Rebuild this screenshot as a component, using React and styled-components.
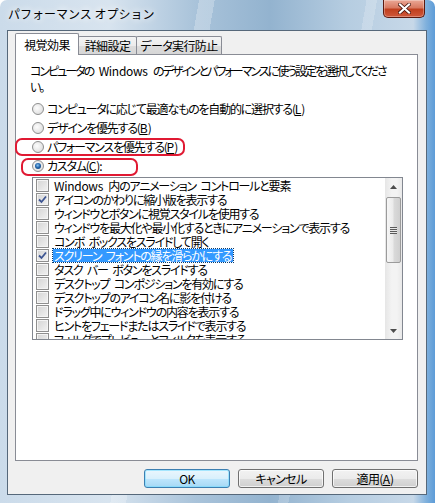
import React from 'react';
import styled, {createGlobalStyle, css} from 'styled-components';

const GlobalStyle = createGlobalStyle`
  html, body {
    margin: 0;
    padding: 0;
  }
  body {
    width: 435px;
    height: 503px;
    overflow: hidden;
    font-family: "Noto Sans CJK JP", sans-serif;
    font-size: 12px;
  }
`;

// narrow kana like the old bitmap UI font
const tight = css`
  font-feature-settings: "palt";
  letter-spacing: -1.2px;
  word-spacing: 3px;
`;

const Window = styled.div`
  width: 435px;
  height: 503px;
  box-sizing: border-box;
  display: flex;
  flex-direction: column;
  padding: 0 8px 8px 7px;
  border-radius: 7px 7px 0 0;
  background:
    linear-gradient(100deg, transparent 0 38%, rgba(255,255,255,0.25) 38% 41%, transparent 41% 70%, rgba(255,255,255,0.2) 70% 72%, transparent 72%),
    linear-gradient(to right, #cbdbea 0%, #d8e4ef 25%, #a9c3da 45%, #93b3cf 62%, #b6cde1 80%, #c7d8e8 95%, #7fb0dc 98%, #5d9cd8 100%);
`;

const TitleBar = styled.div`
  height: 30px;
  display: flex;
  align-items: flex-start;
  justify-content: space-between;
`;

const Title = styled.div`
  margin: 5px 0 0 1px;
  line-height: 18px;
  font-size: 12px;
  color: #000;
  text-shadow: 0 0 6px #fff, 0 0 10px #fff;
`;

const CloseButton = styled.div`
  width: 42px;
  height: 18px;
  margin-right: 2px;
  box-sizing: border-box;
  border: 1px solid #5b1a10;
  border-top: none;
  border-radius: 0 0 5px 5px;
  background: linear-gradient(#eaa896 0%, #d87a62 45%, #c0401f 55%, #d0583a 100%);
  box-shadow: inset 0 0 0 1px rgba(255, 255, 255, 0.3);
  display: flex;
  align-items: center;
  justify-content: center;
`;

const Client = styled.div`
  flex: 1;
  display: flex;
  flex-direction: column;
  background: #f0f0f0;
  border: 1px solid #56687a;
  padding: 2px 8px 6px 7px;
`;

const TabStrip = styled.div`
  height: 21px;
  display: flex;
  align-items: flex-end;
`;

const Tab = styled.div`
  box-sizing: border-box;
  width: ${p => p.$w}px;
  height: ${p => (p.$active ? 22 : 18)}px;
  margin-bottom: ${p => (p.$active ? -1 : 0)}px;
  margin-left: ${p => (p.$first ? 0 : -1)}px;
  position: relative;
  z-index: ${p => (p.$active ? 2 : 1)};
  border: 1px solid #898c95;
  border-bottom: none;
  border-radius: 2px 2px 0 0;
  background: ${p => (p.$active ? '#fff' : 'linear-gradient(#f4f4f4 0%, #ececec 50%, #dddddd 51%, #d6d6d6 100%)')};
  display: flex;
  align-items: center;
  justify-content: center;
  font-size: 12px;
  color: #000;
  white-space: nowrap;
  font-feature-settings: "palt";
  letter-spacing: -0.6px;
`;

const Panel = styled.div`
  flex: 1;
  background: #fff;
  border: 1px solid #898c95;
  padding: 8px 14px 0 14px;
  display: flex;
  flex-direction: column;
  align-items: flex-start;
`;

const Description = styled.div`
  line-height: 16px;
  font-size: 12px;
  white-space: nowrap;
  ${tight}
  letter-spacing: -2px;
`;

const Latin = styled.span`
  letter-spacing: -0.3px;
`;

const RadioGroup = styled.div`
  margin-top: 4px;
  display: flex;
  flex-direction: column;
`;

const RadioRow = styled.div`
  position: relative;
  height: 19px;
  display: flex;
  align-items: center;
  padding-left: 2px;
  white-space: nowrap;
  ${tight}

  &::after {
    content: '';
    display: ${p => (p.$box ? 'block' : 'none')};
    position: absolute;
    box-sizing: border-box;
    left: ${p => p.$box?.left}px;
    top: ${p => p.$box?.top}px;
    width: ${p => p.$box?.width}px;
    height: ${p => p.$box?.height}px;
    border: 2px solid #e01932;
    border-radius: 7px;
  }
`;

const Radio = styled.span`
  box-sizing: border-box;
  flex: none;
  width: 12px;
  height: 12px;
  margin-right: 3px;
  border-radius: 50%;
  border: 1px solid #8e8f8f;
  background: radial-gradient(circle at 40% 40%, #fdfdfd 0%, #e6e6e6 60%, #d4d4d4 100%);
  display: flex;
  align-items: center;
  justify-content: center;

  &::before {
    content: '';
    display: ${p => (p.$checked ? 'block' : 'none')};
    width: 6px;
    height: 6px;
    border-radius: 50%;
    background: radial-gradient(circle at 45% 40%, #8cc4f0 0%, #2467ad 45%, #0c3566 100%);
  }
`;

const Key = styled.span`
  text-decoration: underline;
  letter-spacing: 0;
`;

const ListBox = styled.div`
  margin: 2px 0 0 2px;
  width: 371px;
  height: 163px;
  box-sizing: border-box;
  border: 1px solid #828790;
  display: flex;
  overflow: hidden;
`;

const Items = styled.div`
  flex: 1;
  overflow: hidden;
`;

const Item = styled.div`
  height: 14px;
  line-height: 14px;
  display: flex;
  align-items: center;
  padding-left: 3px;
  white-space: nowrap;
  ${tight}
`;

const Check = styled.span`
  box-sizing: border-box;
  flex: none;
  width: 13px;
  height: 13px;
  margin-right: 4px;
  border: 1px solid #8f8f8f;
  background: linear-gradient(135deg, #d4d4d4 0%, #f2f2f2 100%);
  box-shadow: inset 0 0 0 1px #f4f4f4;
  display: flex;
  align-items: center;
  justify-content: center;
`;

const Label = styled.span`
  line-height: 13px;
  padding: 0 2px 0 1px;
  color: ${p => (p.$selected ? '#fff' : '#000')};
  background: ${p => (p.$selected ? '#3399ff' : 'transparent')};
  outline: ${p => (p.$selected ? '1px dotted #0a3a6a' : 'none')};
`;

const ScrollBar = styled.div`
  width: 17px;
  display: flex;
  flex-direction: column;
  background: linear-gradient(to right, #e6e6e6, #f3f3f3 40%, #f3f3f3 70%, #e9e9e9);
`;

const Arrow = styled.div`
  height: 17px;
  display: flex;
  align-items: center;
  justify-content: center;
`;

const Track = styled.div`
  flex: 1;
  padding-top: 2px;
`;

const Thumb = styled.div`
  box-sizing: border-box;
  height: 66px;
  margin: 0 1px;
  border: 1px solid #9b9b9b;
  border-radius: 2px;
  background: linear-gradient(to right, #f6f6f6 0%, #ebebeb 45%, #d9d9d9 55%, #cfcfcf 100%);
  display: flex;
  align-items: center;
  justify-content: center;
`;

const Grip = styled.div`
  width: 7px;
  height: 7px;
  background: repeating-linear-gradient(#5a5a5a 0 1px, #e8e8e8 1px 2px);
`;

const ButtonRow = styled.div`
  margin-top: 8px;
  display: flex;
  justify-content: flex-end;
  gap: 8px;
`;

const Button = styled.div`
  box-sizing: border-box;
  width: 86px;
  height: 19px;
  border: 1px solid ${p => (p.$default ? '#3c7fb1' : '#707070')};
  border-radius: 3px;
  background: ${p => (p.$default
    ? 'linear-gradient(#eaf6fd 0%, #d9f0fc 50%, #bee6fd 51%, #a7d9f5 100%)'
    : 'linear-gradient(#f2f2f2 0%, #ebebeb 50%, #dddddd 51%, #cfcfcf 100%)')};
  box-shadow: inset 0 0 0 1px ${p => (p.$default ? 'rgba(120, 220, 255, 0.6)' : 'rgba(255, 255, 255, 0.7)')};
  display: flex;
  align-items: center;
  justify-content: center;
  font-size: 12px;
  color: #000;
  font-feature-settings: "palt";
  letter-spacing: -0.6px;
`;

const CloseIcon = () => (
  <svg width="13" height="11" viewBox="0 0 13 11">
    <path d="M2 1.5 L11 9.5 M11 1.5 L2 9.5" stroke="#3a0d06" strokeWidth="3.6" strokeLinecap="square" />
    <path d="M2 1.5 L11 9.5 M11 1.5 L2 9.5" stroke="#fff" strokeWidth="2.2" strokeLinecap="square" />
  </svg>
);

const CheckMark = () => (
  <svg width="9" height="9" viewBox="0 0 9 9">
    <path d="M1 4.5 L3.5 7 L8 1.5" fill="none" stroke="#3d5592" strokeWidth="1.8" />
  </svg>
);

const ArrowIcon = ({down}) => (
  <svg width="7" height="4" viewBox="0 0 7 4">
    <path d={down ? 'M0 0 H7 L3.5 4 Z' : 'M0 4 H7 L3.5 0 Z'} fill="#4d4d4d" />
  </svg>
);

const effects = [
  {latin: 'Windows ', label: '内のアニメーション コントロールと要素'},
  {label: 'アイコンのかわりに縮小版を表示する', checked: true},
  {label: 'ウィンドウとボタンに視覚スタイルを使用する'},
  {label: 'ウィンドウを最大化や最小化するときにアニメーションで表示する'},
  {label: 'コンボ ボックスをスライドして開く'},
  {label: 'スクリーン フォントの縁を滑らかにする', checked: true, selected: true},
  {label: 'タスク バー ボタンをスライドする'},
  {label: 'デスクトップ コンポジションを有効にする'},
  {label: 'デスクトップのアイコン名に影を付ける'},
  {label: 'ドラッグ中にウィンドウの内容を表示する'},
  {label: 'ヒントをフェードまたはスライドで表示する'},
  {label: 'フォルダでプレビューとフィルタを表示する'},
  {label: 'マウス ポインタの下に影を表示する'},
];

const App = () => (
  <>
    <GlobalStyle />
    <Window>
      <TitleBar>
        <Title>パフォーマンス オプション</Title>
        <CloseButton>
          <CloseIcon />
        </CloseButton>
      </TitleBar>
      <Client>
        <TabStrip>
          <Tab $first $active $w={64}>視覚効果</Tab>
          <Tab $w={59}>詳細設定</Tab>
          <Tab $w={86}>データ実行防止</Tab>
        </TabStrip>
        <Panel>
          <Description>
            コンピュータの<Latin> Windows </Latin>のデザインとパフォーマンスに使う設定を選択してくださ
            <br />
            い。
          </Description>
          <RadioGroup>
            <RadioRow>
              <Radio />
              コンピュータに応じて最適なものを自動的に選択する(<Key>L</Key>)
            </RadioRow>
            <RadioRow>
              <Radio />
              デザインを優先する(<Key>B</Key>)
            </RadioRow>
            <RadioRow $box={{left: -15, top: 1, width: 170, height: 18}}>
              <Radio />
              パフォーマンスを優先する(<Key>P</Key>)
            </RadioRow>
            <RadioRow $box={{left: -9, top: 2, width: 117, height: 18}}>
              <Radio $checked />
              カスタム(<Key>C</Key>):
            </RadioRow>
          </RadioGroup>
          <ListBox>
            <Items>
              {effects.map(item => (
                <Item key={item.label}>
                  <Check>{item.checked && <CheckMark />}</Check>
                  <Label $selected={item.selected}>
                    {item.latin && <Latin>{item.latin}</Latin>}
                    {item.label}
                  </Label>
                </Item>
              ))}
            </Items>
            <ScrollBar>
              <Arrow><ArrowIcon /></Arrow>
              <Track>
                <Thumb><Grip /></Thumb>
              </Track>
              <Arrow><ArrowIcon down /></Arrow>
            </ScrollBar>
          </ListBox>
        </Panel>
        <ButtonRow>
          <Button $default>OK</Button>
          <Button>キャンセル</Button>
          <Button>適用(<Key>A</Key>)</Button>
        </ButtonRow>
      </Client>
    </Window>
  </>
);

export default App;
